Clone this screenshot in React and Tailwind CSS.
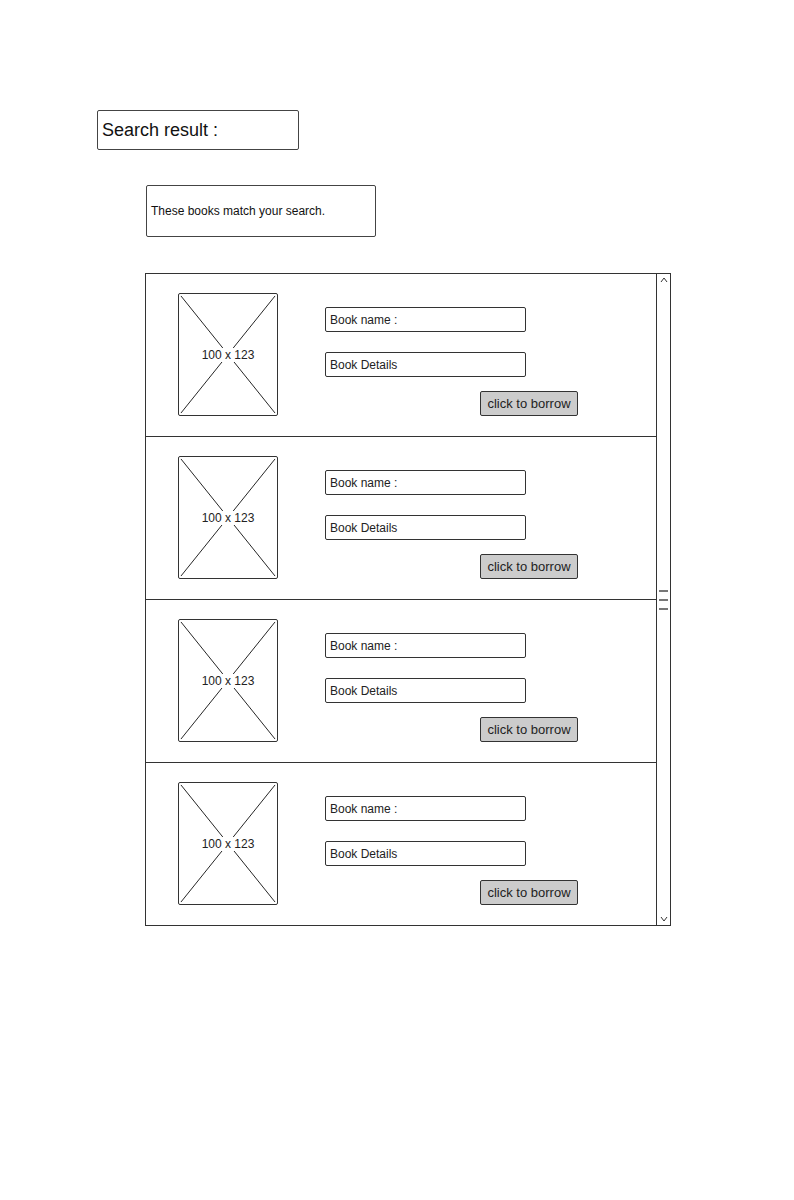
import React from "react";

const books = [1, 2, 3, 4];

const ImagePlaceholder = () => (
  <div className="relative w-[100px] h-[123px] shrink-0 border border-[#333] rounded-[2px]">
    <svg className="absolute inset-0 w-full h-full" viewBox="0 0 100 123" preserveAspectRatio="none">
      <line x1="2" y1="2" x2="98" y2="121" stroke="#222" strokeWidth="1" />
      <line x1="98" y1="2" x2="2" y2="121" stroke="#222" strokeWidth="1" />
    </svg>
    <div className="absolute inset-0 flex items-center justify-center">
      <span className="bg-white px-[1px] text-[12px] leading-[14px] text-[#222]">100 x 123</span>
    </div>
  </div>
);

const BookRow = ({ last }) => (
  <div className={`flex pl-[32px] pt-[19px] pb-[20px] ${last ? "" : "border-b border-[#333]"}`}>
    <ImagePlaceholder />
    <div className="ml-[47px] mt-[14px] flex flex-col">
      <div className="w-[201px] h-[25px] border border-[#333] rounded-[2px] flex items-center pl-[4px] text-[12px] text-[#222]">
        Book name :
      </div>
      <div className="w-[201px] h-[25px] mt-[20px] border border-[#333] rounded-[2px] flex items-center pl-[4px] text-[12px] text-[#222]">
        Book Details
      </div>
      <button className="ml-[155px] mt-[14px] w-[98px] h-[25px] bg-[#cccccc] border border-[#333] rounded-[2px] text-[13px] text-[#222] flex items-center justify-center">
        click to borrow
      </button>
    </div>
  </div>
);

export default function App() {
  return (
    <div className="w-[794px] h-[1200px] bg-white font-['Comic_Sans_MS','Liberation_Sans',sans-serif]">
      <div className="pt-[110px] pl-[97px]">
        <div className="w-[202px] h-[40px] border border-[#444] rounded-[2px] flex items-center pl-[4px] text-[18px] text-[#111]">
          Search result :
        </div>
      </div>

      <div className="pt-[35px] pl-[146px]">
        <div className="w-[230px] h-[52px] border border-[#444] rounded-[2px] flex items-center pl-[4px] text-[12px] text-[#111]">
          These books match your search.
        </div>
      </div>

      <div className="pt-[36px] pl-[145px] flex">
        <div className="w-[511px] border-l border-t border-b border-[#333]">
          {books.map((b, i) => (
            <BookRow key={b} last={i === books.length - 1} />
          ))}
        </div>

        {/* scrollbar */}
        <div className="w-[15px] border border-[#333] flex flex-col items-center justify-between">
          <svg className="w-[10px] h-[10px] mt-[1px]" viewBox="0 0 10 10">
            <path d="M2 7 L5 3 L8 7" fill="none" stroke="#333" strokeWidth="1" />
          </svg>
          <div className="flex flex-col gap-[7px] w-[9px]">
            <div className="h-[2px] bg-[#777]" />
            <div className="h-[2px] bg-[#777]" />
            <div className="h-[2px] bg-[#777]" />
          </div>
          <svg className="w-[10px] h-[10px] mb-[1px]" viewBox="0 0 10 10">
            <path d="M2 3 L5 7 L8 3" fill="none" stroke="#333" strokeWidth="1" />
          </svg>
        </div>
      </div>
    </div>
  );
}
